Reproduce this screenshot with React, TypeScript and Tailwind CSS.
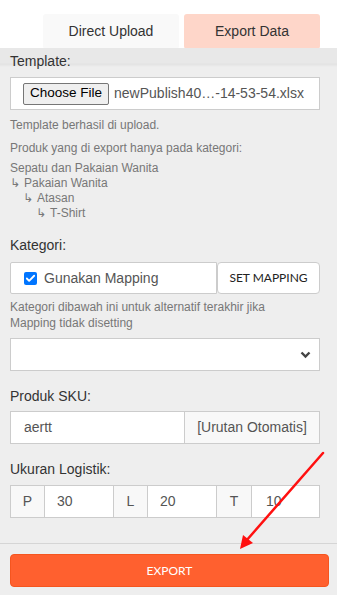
import { Check } from 'lucide-react'

const label = 'text-[14px] leading-4 text-[#333]'
const note = 'text-[12px] leading-[14px] text-[#777]'
const addon = 'flex items-center justify-center bg-[#f8f8f8] border border-[#ccc] text-[14px] text-[#555]'
const field = 'flex items-center bg-white border border-[#ccc] text-[14px] text-[#555]'

function Tree() {
  const rows = [
    { pad: 'pl-0', arrow: false, text: 'Sepatu dan Pakaian Wanita' },
    { pad: 'pl-0', arrow: true, text: 'Pakaian Wanita' },
    { pad: 'pl-[13px]', arrow: true, text: 'Atasan' },
    { pad: 'pl-[26px]', arrow: true, text: 'T-Shirt' },
  ]
  return (
    <div className="mt-[6px] text-[12px] leading-[15px] text-[#777]">
      {rows.map((r) => (
        <div key={r.text} className={`flex items-center ${r.pad}`}>
          {r.arrow && <span className="w-[14px] text-[12px] font-['DejaVu_Sans',sans-serif]">↳</span>}
          <span>{r.text}</span>
        </div>
      ))}
    </div>
  )
}

export default function App() {
  return (
    <div className="relative w-[337px] h-[595px] flex flex-col bg-white font-['Liberation_Sans',Arial,sans-serif] overflow-hidden">
      {/* Tabs */}
      <div className="h-12 flex justify-end gap-[5px] pr-[17px] pt-[14px] bg-white">
        <div className="w-[136px] h-[35px] rounded-[3px] bg-[#f9f9f9] flex items-center justify-center text-[14px] text-[#333]">
          Direct Upload
        </div>
        <div className="w-[136px] h-[35px] rounded-[3px] bg-[#fed6c9] flex items-center justify-center text-[14px] text-[#333]">
          Export Data
        </div>
      </div>

      {/* Scroll body */}
      <div className="flex-1 pl-[10px] pr-[17px] pt-[5px] bg-[linear-gradient(#e8e8e8_0,#e8e8e8_15px,#e2e2e2_16px,#eeeeee_19px)]">
        <div className={label}>Template:</div>
        <div className={`${field} mt-2 h-[33px] pl-[12px]`}>
          <span className="h-[22px] px-[6px] flex items-center bg-[#efefef] border border-[#767676] rounded-[2px] text-[13.5px] text-black">
            Choose File
          </span>
          <span className="ml-[5px] text-[#555]">newPublish40…-14-53-54.xlsx</span>
        </div>

        <div className={`${note} mt-2`}>Template berhasil di upload.</div>
        <div className={`${note} mt-[9px]`}>Produk yang di export hanya pada kategori:</div>
        <Tree />

        <div className={`${label} mt-[16px]`}>Kategori:</div>
        <div className="mt-[9px] flex h-[32px]">
          <div className={`${field} flex-1 pl-[13px] rounded-l-[2px]`}>
            <span className="w-[13px] h-[13px] rounded-[2px] bg-[#0075ff] flex items-center justify-center">
              <Check className="w-[11px] h-[11px] text-white" strokeWidth={4} />
            </span>
            <span className="ml-[7px] text-[14px] text-[#555]">Gunakan Mapping</span>
          </div>
          <button className="w-[103px] bg-white border border-[#ccc] rounded-[4px] font-['Lato',sans-serif] text-[12px] text-[#222]">
            SET MAPPING
          </button>
        </div>

        <div className="mt-[5px] text-[12px] leading-4 text-[#777]">
          Kategori dibawah ini untuk alternatif terakhir jika
          <br />
          Mapping tidak disetting
        </div>
        <div className={`${field} mt-[7px] h-[33px] justify-end pr-[8px]`}>
          <svg width="11" height="8" viewBox="0 0 11 8" className="text-[#444]">
            <path d="M1.5 1.5 L5.5 5.5 L9.5 1.5" fill="none" stroke="currentColor" strokeWidth="2.4" />
          </svg>
        </div>

        <div className={`${label} mt-[17px]`}>Produk SKU:</div>
        <div className="mt-[7px] flex h-[33px]">
          <div className={`${field} flex-1 pl-[13px]`}>aertt</div>
          <div className={`${addon} w-[135px] border-l-0`}>[Urutan Otomatis]</div>
        </div>

        <div className={`${label} mt-[17px]`}>Ukuran Logistik:</div>
        <div className="mt-2 flex h-[33px]">
          <div className={`${addon} w-[35px]`}>P</div>
          <div className={`${field} w-[69px] border-l-0 pl-[12px]`}>30</div>
          <div className={`${addon} w-[34px] border-l-0`}>L</div>
          <div className={`${field} w-[69px] border-l-0 pl-[12px]`}>20</div>
          <div className={`${addon} w-[35px] border-l-0`}>T</div>
          <div className={`${field} flex-1 border-l-0 pl-[14px]`}>10</div>
        </div>
      </div>

      {/* Footer */}
      <div className="border-t border-[#d5d5d5] bg-[#eeeeee] pl-[10px] pr-[8px] pt-[10px] pb-[8px]">
        <button className="w-full h-[33px] rounded-[4px] bg-[#ff602f] border border-[#f5551f] text-white font-['Lato',sans-serif] text-[12px]">
          EXPORT
        </button>
      </div>

      {/* Annotation arrow */}
      <svg className="absolute left-0 top-0 pointer-events-none" width="337" height="595">
        <line x1="323" y1="453" x2="246" y2="541" stroke="#ff1010" strokeWidth="2.5" strokeLinecap="round" />
        <polygon points="240,549 243,535 253,543" fill="#ff1010" />
      </svg>
    </div>
  )
}
